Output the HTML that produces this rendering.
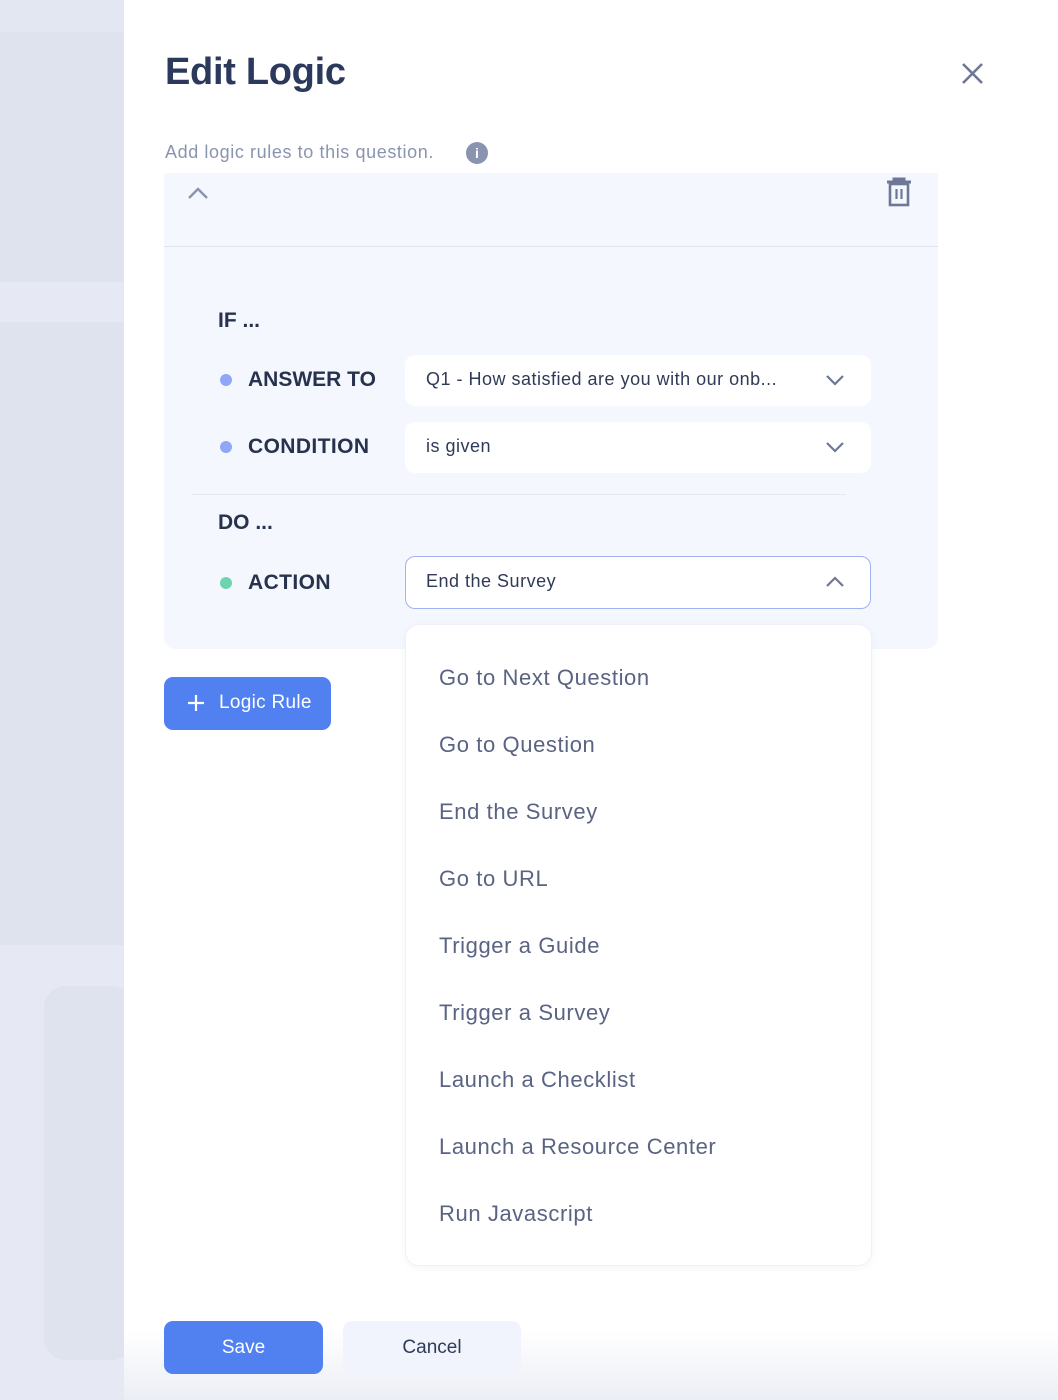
<!DOCTYPE html><html><head><style>
*{margin:0;padding:0;box-sizing:border-box}
body{width:1058px;height:1400px;position:relative;overflow:hidden;background:#fff;font-family:"Liberation Sans",sans-serif}
.a{position:absolute}
.lbl{font-size:21px;font-weight:600;color:#27324d;letter-spacing:0px}
.dot{width:12px;height:12px;border-radius:50%}
.inp{left:405px;width:466px;height:51px;background:#fff;border-radius:10px;font-size:18px;color:#2f3a56;padding:14px 0 0 21px;letter-spacing:0.5px}
.it{left:439px;font-size:22px;color:#5a6482;letter-spacing:0.6px}
</style></head><body>
<div class="a" style="left:0;top:0;width:124px;height:1400px;background:#e3e7f1"></div>
<div class="a" style="left:0;top:32px;width:124px;height:250px;background:#dfe3ee"></div>
<div class="a" style="left:0;top:282px;width:124px;height:40px;background:#e6e9f3"></div>
<div class="a" style="left:0;top:322px;width:124px;height:623px;background:#dfe3ee"></div>
<div class="a" style="left:0;top:945px;width:124px;height:455px;background:#e6e9f3"></div>
<div class="a" style="left:44px;top:986px;width:90px;height:374px;background:#dfe3ee;border-radius:22px"></div>
<div class="a" style="left:124px;top:0;width:934px;height:1400px;background:#fff;border-radius:0 0 18px 0"></div>
<div class="a" style="left:165px;top:51px;font-size:38px;font-weight:600;color:#2b3a5c;letter-spacing:-0.3px">Edit Logic</div>
<svg class="a" style="left:960px;top:61px" width="25" height="25"><path d="M3 3L22 22M22 3L3 22" stroke="#6e7896" stroke-width="2.6"/></svg>
<div class="a" style="left:165px;top:142px;font-size:18px;color:#8a94ae;letter-spacing:0.6px">Add logic rules to this question.</div>
<div class="a" style="left:466px;top:142px;width:22px;height:22px;border-radius:50%;background:#8a94ae;color:#fff;font-size:14px;font-weight:bold;text-align:center;line-height:22px">i</div>
<div class="a" style="left:164px;top:173px;width:774px;height:476px;background:#f4f7fe;border-radius:0 0 12px 12px"></div>
<div class="a" style="left:164px;top:246px;width:774px;height:1px;background:#dfe4f0"></div>
<svg class="a" style="left:187px;top:185px" width="22" height="16"><path d="M2 13L11 4L20 13" stroke="#8a94ae" stroke-width="2.4" fill="none"/></svg>
<svg class="a" style="left:885px;top:176px" width="28" height="32"><path d="M2 6H26M9 6V3H19V6" stroke="#6e7896" stroke-width="3" fill="none"/><rect x="5" y="8" width="18" height="21" stroke="#6e7896" stroke-width="2.6" fill="none"/><path d="M11.5 13V23M16.5 13V23" stroke="#6e7896" stroke-width="2.2"/></svg>
<div class="a lbl" style="left:218px;top:309px">IF ...</div>
<div class="a dot" style="left:220px;top:374px;background:#90a7f7"></div>
<div class="a lbl" style="left:248px;top:368px">ANSWER TO</div>
<div class="a inp" style="top:355px">Q1 - How satisfied are you with our onb...</div>
<div class="a dot" style="left:220px;top:441px;background:#90a7f7"></div>
<div class="a lbl" style="left:248px;top:435px;letter-spacing:0.4px">CONDITION</div>
<div class="a inp" style="top:422px">is given</div>
<svg class="a" style="left:825px;top:373px" width="20" height="14"><path d="M2 3L10 11L18 3" stroke="#6e7896" stroke-width="2.2" fill="none"/></svg>
<svg class="a" style="left:825px;top:440px" width="20" height="14"><path d="M2 3L10 11L18 3" stroke="#6e7896" stroke-width="2.2" fill="none"/></svg>
<div class="a" style="left:192px;top:494px;width:654px;height:1px;background:#e4e8f2"></div>
<div class="a lbl" style="left:218px;top:511px">DO ...</div>
<div class="a dot" style="left:220px;top:577px;background:#6fd3b0"></div>
<div class="a lbl" style="left:248px;top:571px;letter-spacing:0.4px">ACTION</div>
<div class="a inp" style="top:556px;height:53px;border:1.5px solid #9fb3f2;padding-left:20px">End the Survey</div>
<svg class="a" style="left:825px;top:575px" width="20" height="14"><path d="M2 11L10 3L18 11" stroke="#6e7896" stroke-width="2.2" fill="none"/></svg>
<div class="a" style="left:164px;top:677px;width:167px;height:53px;background:#5180f1;border-radius:9px;color:#fff;font-size:19px;padding:15px 0 0 55px;letter-spacing:0.3px">Logic Rule</div>
<svg class="a" style="left:187px;top:694px" width="18" height="18"><path d="M9 1V17M1 9H17" stroke="#fff" stroke-width="2.2"/></svg>
<div class="a" style="left:405px;top:624px;width:467px;height:642px;background:#fff;border:1px solid #eef1f8;border-radius:14px;box-shadow:0 2px 8px rgba(100,110,150,0.06)"></div>
<div class="a it" style="top:665px">Go to Next Question</div>
<div class="a it" style="top:732px">Go to Question</div>
<div class="a it" style="top:799px">End the Survey</div>
<div class="a it" style="top:866px">Go to URL</div>
<div class="a it" style="top:933px">Trigger a Guide</div>
<div class="a it" style="top:1000px">Trigger a Survey</div>
<div class="a it" style="top:1067px">Launch a Checklist</div>
<div class="a it" style="top:1134px">Launch a Resource Center</div>
<div class="a it" style="top:1201px">Run Javascript</div>
<div class="a" style="left:124px;top:1330px;width:934px;height:70px;background:linear-gradient(#fff,#eceef5)"></div>
<div class="a" style="left:164px;top:1321px;width:159px;height:53px;background:#5180f1;border-radius:9px;color:#fff;font-size:19px;text-align:center;line-height:53px">Save</div>
<div class="a" style="left:343px;top:1321px;width:178px;height:53px;background:#f1f4fc;border-radius:9px;color:#2f3a56;font-size:19px;text-align:center;line-height:53px">Cancel</div>
</body></html>
